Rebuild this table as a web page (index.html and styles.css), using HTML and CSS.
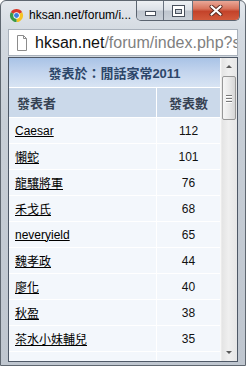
FILE: index.html
```html
<!DOCTYPE html>
<html>
<head>
<meta charset="utf-8">
<link rel="stylesheet" href="styles.css">
</head>
<body>
<div class="window">
  <div class="titlebar">
    <svg class="chrome" width="15" height="15" viewBox="0 0 16 16">
      <path d="M8 8 L1.94 4.5 A7 7 0 0 1 14.06 4.5 Z" fill="#d8392c"/>
      <path d="M8 8 L14.06 4.5 A7 7 0 0 1 8 15 Z" fill="#f6c324"/>
      <path d="M8 8 L8 15 A7 7 0 0 1 1.94 4.5 Z" fill="#3a9a48"/>
      <circle cx="8" cy="8" r="3.4" fill="#fff"/>
      <circle cx="8" cy="8" r="2.6" fill="#3b7ee0"/>
    </svg>
    <span class="title">hksan.net/forum/i...</span>
    <div class="buttons">
      <div class="btn min"><span class="min-bar"></span></div>
      <div class="btn max"><span class="max-box"></span></div>
      <div class="btn close">
        <svg width="14" height="11" viewBox="0 0 14 11">
          <path d="M2.5 1.5 L11.5 9.5 M11.5 1.5 L2.5 9.5" stroke="#5a2a20" stroke-width="4" stroke-linecap="round"/>
          <path d="M2.5 1.5 L11.5 9.5 M11.5 1.5 L2.5 9.5" stroke="#fff" stroke-width="2.2" stroke-linecap="round"/>
        </svg>
      </div>
    </div>
  </div>
  <div class="urlbar">
    <svg class="pageicon" width="12" height="16" viewBox="0 0 12 16">
      <path d="M1.5 0.5 H7.5 L10.5 3.5 V15.5 H1.5 Z" fill="#fff" stroke="#8c8c8c"/>
      <path d="M7.5 0.5 V3.5 H10.5" fill="none" stroke="#8c8c8c"/>
    </svg>
    <span class="url"><span class="host">hksan.net</span><span class="path">/forum/index.php?s</span></span>
  </div>
  <div class="viewport">
    <div class="page">
      <table class="stats">
        <tr><td class="caption" colspan="2">發表於：閒話家常2011</td></tr>
        <tr><td class="head name-col">發表者</td><td class="head num-col">發表數</td></tr>
        <tr><td class="name"><a>Caesar</a></td><td class="num">112</td></tr>
        <tr><td class="name"><a>懶蛇</a></td><td class="num">101</td></tr>
        <tr><td class="name"><a>龍驤將軍</a></td><td class="num">76</td></tr>
        <tr><td class="name"><a>禾戈氏</a></td><td class="num">68</td></tr>
        <tr><td class="name"><a>neveryield</a></td><td class="num">65</td></tr>
        <tr><td class="name"><a>魏孝政</a></td><td class="num">44</td></tr>
        <tr><td class="name"><a>廖化</a></td><td class="num">40</td></tr>
        <tr><td class="name"><a>秋盈</a></td><td class="num">38</td></tr>
        <tr><td class="name"><a>茶水小妹輔兒</a></td><td class="num">35</td></tr>
        <tr><td class="name"></td><td class="num"></td></tr>
      </table>
    </div>
    <div class="scrollbar">
      <div class="arrow up"><span class="tri-up"></span></div>
      <div class="thumb"><span class="grip"></span><span class="grip"></span><span class="grip"></span></div>
      <div class="track"></div>
      <div class="arrow down"><span class="tri-down"></span></div>
    </div>
  </div>
</div>
</body>
</html>
```
FILE: styles.css
```css
html, body {
  margin: 0;
  padding: 0;
  background: #ffffff;
}
body {
  width: 246px;
  height: 366px;
  overflow: hidden;
}
.window {
  box-sizing: border-box;
  width: 246px;
  height: 366px;
  border: 1px solid #5f6770;
  border-radius: 6px 6px 0 0;
  background: linear-gradient(180deg, #e4e8ed 0, #d5dbe2 28px, #c7ced6 120px, #bfc6cf 100%);
  display: flex;
  flex-direction: column;
  overflow: hidden;
}
.titlebar {
  height: 28px;
  flex: none;
  display: flex;
  align-items: flex-start;
}
.chrome {
  margin: 7px 0 0 8px;
  flex: none;
}
.title {
  margin: 7px 0 0 5px;
  font: 12px/15px "Liberation Sans", Arial, sans-serif;
  color: #000;
  white-space: nowrap;
}
.buttons {
  margin-left: auto;
  margin-right: 5px;
  display: flex;
  border: 1px solid #5b6470;
  border-top: none;
  border-radius: 0 0 5px 5px;
  overflow: hidden;
  height: 19px;
}
.btn {
  height: 19px;
  display: flex;
  align-items: center;
  justify-content: center;
  box-sizing: border-box;
}
.min, .max {
  width: 27px;
  background: linear-gradient(180deg, #eef1f4 0, #dde2e8 45%, #bfc6cf 55%, #c9d0d8 100%);
  border-right: 1px solid #6a7380;
}
.min {
  align-items: flex-end;
}
.min-bar {
  width: 9px;
  height: 3px;
  background: #fff;
  border: 1px solid #48505c;
  margin-bottom: 4px;
}
.max {
  width: 29px;
}
.max-box {
  width: 7px;
  height: 5px;
  border: 2px solid #fff;
  border-top-width: 3px;
  outline: 1px solid #48505c;
  box-shadow: inset 0 0 0 1px #48505c;
  margin-top: 1px;
}
.close {
  width: 46px;
  background: linear-gradient(180deg, #eaa898 0, #d8755e 40%, #c4432a 55%, #d25a3c 100%);
}
.urlbar {
  height: 27px;
  flex: none;
  margin: 0 7px;
  box-sizing: border-box;
  border: 1px solid #a9b1bb;
  background: #fff;
  display: flex;
  align-items: center;
  overflow: hidden;
}
.pageicon {
  margin-left: 7px;
  flex: none;
}
.url {
  margin-left: 7px;
  font: 16px/20px "Liberation Sans", Arial, sans-serif;
  white-space: nowrap;
}
.host {
  color: #111;
}
.path {
  color: #7f7f7f;
}
.viewport {
  margin: 1px 7px 0;
  height: 305px;
  flex: none;
  box-sizing: border-box;
  border: 1px solid #4e5866;
  display: flex;
  overflow: hidden;
}
.page {
  flex: 1;
  background: #fff;
  overflow: hidden;
}
.stats {
  width: 211px;
  border-collapse: separate;
  border-spacing: 0;
  font-family: "Liberation Sans", "Noto Sans CJK TC", Arial, sans-serif;
}
.stats td {
  padding: 0;
}
.caption {
  height: 29px;
  border-bottom: 1px solid #fff;
  background: linear-gradient(180deg, #a9c3e6 0, #c4d5ee 50%, #d8e4f3 100%);
  text-align: center;
  font-size: 13px;
  font-weight: bold;
  color: #2d4669;
}
.head {
  height: 29px;
  border-bottom: 1px solid #fff;
  background: #cbd9ea;
  font-size: 13px;
  font-weight: bold;
  color: #364253;
}
.name-col {
  width: 139px;
  padding-left: 8px !important;
  border-right: 1px solid #fff;
}
.num-col {
  text-align: center;
}
.name {
  height: 25px;
  border-bottom: 1px solid #fff;
  border-right: 1px solid #fff;
  background: #f3f7fc;
  padding-left: 6px !important;
  font-size: 12px;
}
.name a {
  color: #000;
  text-decoration: underline;
}
.num {
  height: 25px;
  border-bottom: 1px solid #fff;
  background: #f3f7fc;
  text-align: center;
  font-size: 12px;
  color: #111;
}
.scrollbar {
  width: 17px;
  flex: none;
  display: flex;
  flex-direction: column;
  background: linear-gradient(90deg, #ffffff 0, #e4e4e4 2px, #efefef 50%, #e6e6e6 100%);
}
.arrow {
  height: 17px;
  flex: none;
  display: flex;
  align-items: center;
  justify-content: center;
}
.tri-up {
  width: 0;
  height: 0;
  border-left: 3px solid transparent;
  border-right: 3px solid transparent;
  border-bottom: 3px solid #5a5a5a;
}
.tri-down {
  width: 0;
  height: 0;
  border-left: 3px solid transparent;
  border-right: 3px solid transparent;
  border-top: 3px solid #5a5a5a;
}
.thumb {
  margin: 1px 1px 0 2px;
  height: 44px;
  flex: none;
  box-sizing: border-box;
  border: 1px solid #979797;
  border-radius: 2px;
  background: linear-gradient(90deg, #f6f6f6 0, #e9e9e9 50%, #d6d6d6 100%);
  display: flex;
  flex-direction: column;
  align-items: center;
  justify-content: center;
  gap: 2px;
}
.grip {
  width: 6px;
  height: 1px;
  background: #7a7a7a;
  box-shadow: 0 1px 0 #fff;
}
.track {
  flex: 1;
}
```
